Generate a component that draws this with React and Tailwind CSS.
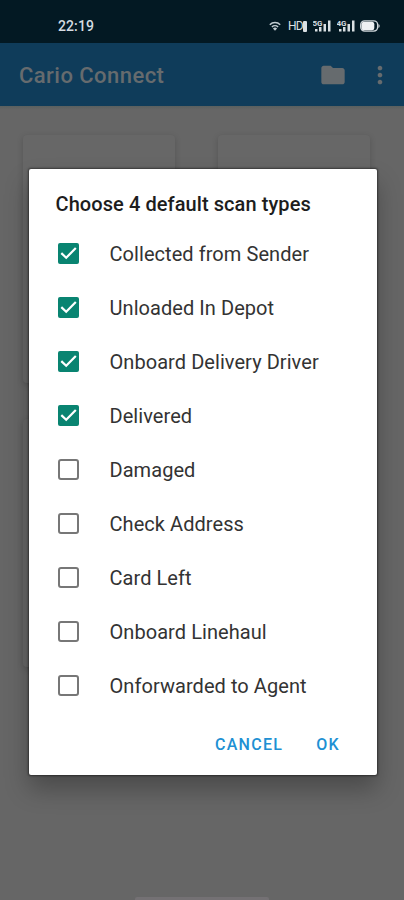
const SCAN_TYPES = [
  { label: "Collected from Sender", checked: true },
  { label: "Unloaded In Depot", checked: true },
  { label: "Onboard Delivery Driver", checked: true },
  { label: "Delivered", checked: true },
  { label: "Damaged", checked: false },
  { label: "Check Address", checked: false },
  { label: "Card Left", checked: false },
  { label: "Onboard Linehaul", checked: false },
  { label: "Onforwarded to Agent", checked: false },
];

function Signal({ label }) {
  return (
    <svg width="19" height="14" viewBox="0 0 19 14" fill="#d9dfe2">
      <text x="-0.5" y="6.8" fontSize="8" fontWeight="700" fontFamily="Roboto, sans-serif">{label}</text>
      <rect x="2" y="10" width="2.500" height="2.500" />
      <rect x="6" y="8" width="2.500" height="4.5" />
      <rect x="10.500" y="5" width="2.500" height="7.5" />
      <rect x="15" y="1.5" width="2.500" height="11" />
    </svg>
  );
}

function StatusBar() {
  return (
    <div className="flex h-[43px] items-center justify-between bg-[#031923] pt-[9px] pr-[24px] pl-[58px]">
      <span className="text-[14px] leading-none font-medium tracking-[0.100px] text-[#d5dce1]">22:19</span>
      <div className="flex items-center">
        <svg width="12" height="12" viewBox="0 0 12 12" fill="none" stroke="#c3cdd2" strokeWidth="1.5">
          <path d="M.8 4.7a7.4 7.4 0 0 1 10.4 0" />
          <path d="M2.9 7a4.5 4.5 0 0 1 6.2 0" />
          <path d="M6 10.8 3.9 8.6a3 3 0 0 1 4.2 0z" fill="#c3cdd2" stroke="none" />
        </svg>
        <div className="ml-[7px] flex w-[19px] items-center">
          <span className="text-[12px] leading-none tracking-[-0.700px] text-[#dbe1e4]">HD</span>
          <span className="h-[11px] w-[4px] shrink-0 rounded-[1px] bg-[#dbe1e4]" />
        </div>
        <div className="ml-[6px] flex gap-[5px]">
          <Signal label="5G" />
          <Signal label="4G" />
        </div>
        <svg className="ml-[4px]" width="20" height="12" viewBox="0 0 20 12">
          <rect x="0.7" y="0.9" width="17" height="10.2" rx="4" fill="none" stroke="#cdd4d8" strokeWidth="1.4" />
          <rect x="1.5" y="1.7" width="12.800" height="8.6" rx="2.5" fill="#eef1f3" />
          <path d="M18.5 4v4q1.2-.6 1.2-2t-1.2-2z" fill="#cdd4d8" />
        </svg>
      </div>
    </div>
  );
}

function AppBar() {
  return (
    <div className="flex h-[63px] items-center bg-[#0f3c5a] pl-[19px] text-[#666b6e]">
      <h1 className="flex-1 pt-[2px] text-[22px] leading-none font-medium tracking-[0.450px]">Cario Connect</h1>
      <svg width="28" height="28" viewBox="0 0 24 24" fill="currentColor">
        <path d="M10 4H4c-1.1 0-1.99.9-1.99 2L2 18c0 1.100.9 2 2 2h16c1.100 0 2-.9 2-2V8c0-1.100-.9-2-2-2h-8l-2-2z" />
      </svg>
      <svg className="mr-[10px] ml-[19px]" width="28" height="28" viewBox="0 0 24 24" fill="currentColor">
        <path d="M12 8c1.100 0 2-.9 2-2s-.9-2-2-2-2 .9-2 2 .9 2 2 2zm0 2c-1.100 0-2 .9-2 2s.9 2 2 2 2-.9 2-2-.9-2-2-2zm0 6c-1.100 0-2 .9-2 2s.9 2 2 2 2-.9 2-2-.9-2-2-2z" />
      </svg>
    </div>
  );
}

function Checkbox({ checked }) {
  if (!checked) {
    return <span className="mb-[2px] size-[21px] rounded-[3px] border-2 border-[#777777]" />;
  }
  return (
    <span className="mb-[2px] flex size-[21px] items-center justify-center rounded-[2px] bg-[#098471]">
      <svg width="21" height="21" viewBox="0 0 21 21" fill="none" stroke="#fff" strokeWidth="2.2">
        <path d="M3.300 10.100 8.200 14.800 17.800 4.900" />
      </svg>
    </span>
  );
}

function Dialog() {
  return (
    <div className="absolute top-[169px] left-[28.500px] flex h-[606px] w-[348.500px] flex-col rounded-[2px] bg-white shadow-[0_0_2px_1px_rgba(0,0,0,0.45),0_14px_24px_0_rgba(0,0,0,0.28)]">
      <h2 className="pt-[23px] pl-[27px] text-[20px] leading-[24px] font-medium tracking-[0.080px] text-[#1d1d1d]">
        Choose 4 default scan types
      </h2>
      <ul className="mt-[11px]">
        {SCAN_TYPES.map(({ label, checked }) => (
          <li key={label} className="flex h-[54px] items-center pl-[29.500px]">
            <Checkbox checked={checked} />
            <span className="ml-[30.500px] text-[20px] leading-none tracking-[0.060px] text-[#333333]">{label}</span>
          </li>
        ))}
      </ul>
      <div className="mt-[22px] flex justify-end gap-[33px] pr-[37px] text-[16px] leading-[20px] font-medium tracking-[1.300px] text-[#2090d3]">
        <button>CANCEL</button>
        <button>OK</button>
      </div>
    </div>
  );
}

export default function App() {
  return (
    <div className="relative flex h-[900px] w-[404px] flex-col overflow-hidden bg-[#666666] font-[Roboto,sans-serif]">
      <StatusBar />
      <AppBar />
      <div className="h-[4px] bg-linear-to-b from-[#59605f] to-[#666666]" />
      <div className="mt-[25px] ml-[23px] grid grid-cols-[152px_152px] grid-rows-[248px_248px] gap-x-[43px] gap-y-[36px]">
        {[0, 1, 2, 3].map((card) => (
          <div key={card} className="rounded-[4px] bg-[#676767] shadow-[0_2px_6px_0_rgba(0,0,0,0.18)]" />
        ))}
      </div>
      <div className="mx-auto mt-auto h-[3px] w-[134px] rounded-t-[2px] bg-[#747174]" />
      <Dialog />
    </div>
  );
}
